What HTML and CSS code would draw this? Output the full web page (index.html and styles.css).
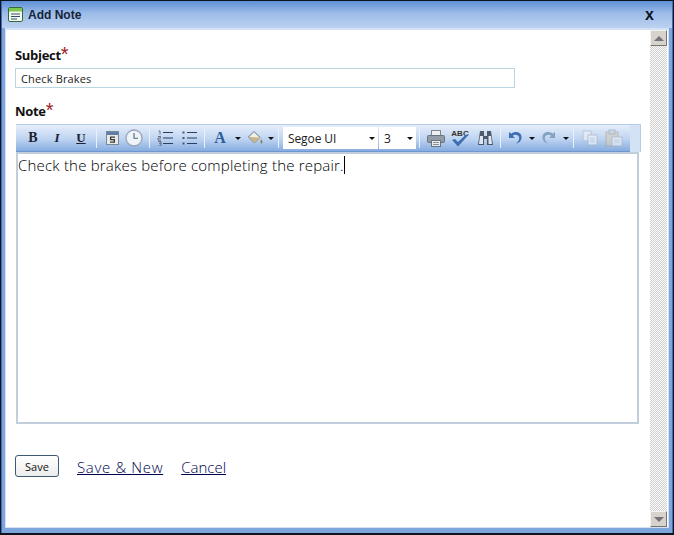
FILE: index.html
```html
<!DOCTYPE html>
<html lang="en">
<head>
<meta charset="utf-8">
<title>Add Note</title>
<link rel="stylesheet" href="styles.css">
</head>
<body>
<div class="window">
  <header class="titlebar">
    <svg class="title-icon" width="17" height="17" viewBox="0 0 17 17"><rect x="1.500" y="1.500" width="14" height="14" rx="1.500" fill="#f4f8ee" stroke="#2f6b3a"/><rect x="2" y="2" width="13" height="3.500" fill="#7ec850"/><path d="M4 8h9M4 10.500h9M4 13h6" stroke="#35506a"/></svg>
    <span class="title-text">Add Note</span>
    <span class="close">x</span>
  </header>
  <div class="client">
    <main class="content">
      <label class="field-label">Subject<span class="req">*</span></label>
      <input class="subject" type="text" value="Check Brakes">
      <label class="field-label note-label">Note<span class="req">*</span></label>
      <div class="editor">
        <div class="toolbar-wrap">
          <div class="toolbar">
            <span class="btn w24 fmt bold">B</span>
            <span class="btn w24 fmt italic">I</span>
            <span class="btn w24 fmt under">U</span>
            <span class="sep s9"></span>
            <span class="btn w20"><svg width="13" height="14" viewBox="0 0 13 14"><rect x=".5" y=".5" width="12" height="13" fill="#e8e8e4" stroke="#7b8896"/><rect x="1" y="1" width="11" height="3" fill="#5d7fa6"/><path d="M4 5.500h5v1.200H5.300v1.400H9v3.700H4v-1.200h3.700V9.300H4z" fill="#3a3a3a"/></svg></span>
            <span class="btn w24"><svg width="18" height="18" viewBox="0 0 18 18"><circle cx="9" cy="9" r="8" fill="#eef3f9" stroke="#98a4b4" stroke-width="1.300"/><path d="M9 4v5.300h4" fill="none" stroke="#5a6573" stroke-width="1.100"/></svg></span>
            <span class="sep s7"></span>
            <span class="btn w24"><svg width="16" height="16" viewBox="0 0 16 16"><path d="M6 2.500h10M6 8h10M6 13.500h10" stroke="#2a4060" stroke-width="1.100"/><path d="M1.500 1h1.500v3.500M1 6.500h2.500v1.500H1v2h3M1 11.500h3v1.800H2M4 13.300V16H1" fill="none" stroke="#556" stroke-width=".8"/></svg></span>
            <span class="btn w24"><svg width="16" height="16" viewBox="0 0 16 16"><path d="M6 2.500h10M6 8h10M6 13.500h10" stroke="#2a4060" stroke-width="1.100"/><path d="M1.500 1.500h2v2h-2zM1.500 7h2v2h-2zM1.500 12.500h2v2h-2z" fill="#4a5a70"/></svg></span>
            <span class="sep s8"></span>
            <span class="btn w22 font-a">A</span>
            <span class="arrow w13"></span>
            <span class="btn w22"><svg width="17" height="16" viewBox="0 0 17 16"><path d="M7 1.500l6 6-5.500 5.500-6-6z" fill="#f0f0ea" stroke="#6c7480"/><path d="M2 7l6 6 5-5.500z" fill="#c9b58a"/><path d="M14 9c1.500 2 2 3 1 4s-2 0-1.500-1z" fill="#8c7d5a"/></svg></span>
            <span class="arrow w9"></span>
            <span class="sep s8"></span>
            <span class="select w95">Segoe UI<i></i></span>
            <span class="select w37">3<i></i></span>
            <span class="sep s8"></span>
            <span class="btn w24 soft"><svg width="18" height="17" viewBox="0 0 18 17"><rect x="4.500" y=".5" width="9" height="6" fill="#f4f4f4" stroke="#777"/><rect x=".5" y="5.500" width="17" height="7" rx="1" fill="#8b929a" stroke="#5b626a"/><rect x="4.500" y="10.500" width="9" height="6" fill="#f4f4f4" stroke="#666"/><path d="M6 12.500h6M6 14.500h6" stroke="#888"/></svg></span>
            <span class="btn w24 abc"><b>ABC</b><svg width="18" height="13" viewBox="0 0 18 13"><path d="M1 6l3-1 3 3 8-7.500 2 1L7 12.500z" fill="#3d6fb0"/></svg></span>
            <span class="btn w24 gapl soft"><svg width="17" height="16" viewBox="0 0 17 16"><path d="M3 1h4v5h3V1h4l2 14h-6V9H7v6H1z" fill="#3c4450"/><path d="M3 6h3v8H2zM11.500 6H14l1 8h-3.500z" fill="#e6ecf2"/></svg></span>
            <span class="sep s6"></span>
            <span class="btn w24"><svg width="16" height="16" viewBox="0 0 16 16"><path d="M2 2v6h6L5.700 5.700C8 4 11 4.500 12 7c.7 2-.3 4.500-3 6.500 3.500-.5 6-3.500 5.500-7C14 2.500 9 .5 4.300 3.700z" fill="#3f70b4"/></svg></span>
            <span class="arrow w10"></span>
            <span class="btn w24"><svg width="16" height="16" viewBox="0 0 16 16"><path d="M14 2v6H8l2.300-2.300C8 4 5 4.500 4 7c-.7 2 .3 4.500 3 6.500-3.500-.5-6-3.500-5.500-7C2 2.500 7 .5 11.700 3.700z" fill="#83a2bf"/></svg></span>
            <span class="arrow w9"></span>
            <span class="sep s8"></span>
            <span class="btn w24 dim"><svg width="16" height="16" viewBox="0 0 16 16"><rect x="1" y="1" width="8" height="10" fill="#f0f4f8" stroke="#a5b3c3"/><rect x="6" y="5" width="9" height="10" fill="#fafcfe" stroke="#a5b3c3"/><path d="M8 8h5M8 10h5M8 12h5" stroke="#b9c5d3"/></svg></span>
            <span class="btn w24 dim"><svg width="18" height="18" viewBox="0 0 18 18"><rect x="1" y="3" width="12" height="14" fill="#d5cdb8" stroke="#a5a596"/><rect x="4" y="1" width="6" height="4" fill="#c7ccd3" stroke="#9aa3ad"/><rect x="7" y="8" width="10" height="9" fill="#f4f6f8" stroke="#a5b3c3"/><path d="M9 11h6M9 13h6" stroke="#b9c5d3"/></svg></span>
          </div>
        </div>
        <div class="edit-area">Check the brakes before completing the repair.<span class="caret"></span></div>
      </div>
      <div class="actions">
        <button class="save" type="button">Save</button>
        <a class="link save-new" href="#">Save &amp; New</a>
        <a class="link" href="#">Cancel</a>
      </div>
    </main>
    <div class="scrollbar">
      <span class="sb-btn"><i class="up"></i></span>
      <span class="sb-track"></span>
      <span class="sb-btn"><i class="down"></i></span>
    </div>
  </div>
</div>
</body>
</html>
```
FILE: styles.css
```css
* { box-sizing: border-box; }
html, body { margin: 0; padding: 0; background: #fff; }
body { font-family: "Open Sans", "Noto Sans", sans-serif; }
.window {
  width: 674px; height: 535px; display: flex; flex-direction: column;
  border: 1px solid #0d1420; border-width: 1px 1px 2px 1px;
  background: #7fa6dc; padding: 0 4px 5px 4px;
  box-shadow: inset 1px 0 0 #3d6cb8, inset -1px 0 0 #3d6cb8;
}
.titlebar {
  margin: 0 -3px; height: 27px; flex: none; display: flex; align-items: center; padding: 0 18px 0 5px;
  background: linear-gradient(#5e8fd6 0, #9cbce8 45%, #bcd2f0 100%);
}
.title-icon { flex: none; }
.title-text { margin-left: 4px; font: bold 12px "Liberation Sans", sans-serif; color: #16233a; }
.close { margin-left: auto; font: bold 16px/16px "Liberation Sans", sans-serif; color: #0c1524; }
.client {
  flex: 1; display: flex; min-height: 0; background: #fff;
  border: 1px solid #d3e1f4; border-width: 2px 1px 1px 1px;
}
.content { flex: 1; padding: 14px 0 0 9px; min-width: 0; display: flex; flex-direction: column; }
.field-label { font: bold 13px/20px "Open Sans", sans-serif; color: #111; height: 20px; letter-spacing: -.3px; display: block; }
.req { color: #a01d22; font: 20px/20px "Liberation Sans", sans-serif; vertical-align: -1px; }
.subject {
  display: block; width: 500px; height: 20px; margin-top: 4px; padding: 0 5px;
  border: 1px solid #b9d5e2; background: #fff; font: 11px "Open Sans", sans-serif; letter-spacing: .15px; color: #222; outline: 0;
}
.note-label { margin-top: 12px; }
.editor { width: 625px; margin-top: 4px; margin-left: 1px; }
.toolbar-wrap { background: #d3e2f5; border-top: 1px solid #b7cce6; height: 28px; border-right: 1px solid #b7cce6; }
.toolbar {
  width: 614px; height: 27px; display: flex; align-items: center; padding-left: 5px;
  background: linear-gradient(#e6eefb 0, #bdd3f1 55%, #86ace0 100%);
  border-bottom: 1px solid #6f97cf;
}
.btn { flex: none; height: 22px; display: flex; align-items: center; justify-content: center; position: relative; }
.w20 { width: 20px; } .w22 { width: 22px; } .w24 { width: 24px; }
.w9 { width: 9px; } .w10 { width: 10px; } .w13 { width: 13px; }
.w95 { width: 95px; } .w37 { width: 37px; margin-left: 1px; }
.gapl { margin-left: 1px; }
.fmt { font: bold 13px "Liberation Serif", serif; color: #1c2230; }
.bold { font-size: 14px; }
.italic { font-style: italic; }
.under { text-decoration: underline; }
.font-a { font: bold 16px "Liberation Serif", serif; color: #2f5d9c; }
.abc { flex-direction: column; }
.abc b { font: bold 8px/7px "Liberation Sans", sans-serif; color: #333; margin-bottom: -3px; }
.dim { opacity: .6; }
.soft { opacity: .85; }
.sep { flex: none; height: 19px; position: relative; }
.sep::after { content: ""; position: absolute; top: 0; bottom: 0; left: 3px; width: 1px; background: #e9f1fb; }
.s6 { width: 6px; } .s7 { width: 7px; } .s8 { width: 8px; } .s9 { width: 9px; }
.arrow { flex: none; height: 22px; display: flex; align-items: center; justify-content: center; }
.arrow::after { content: ""; border: 3px solid transparent; border-top: 3px solid #111; border-bottom: 0; }
.select {
  flex: none; height: 22px; background: #fff; display: flex; align-items: center; padding-left: 5px;
  font: 12px "Open Sans", sans-serif; letter-spacing: -.1px; color: #222; position: relative;
}
.select i { position: absolute; right: 3px; top: 10px; border: 3px solid transparent; border-top: 3px solid #111; border-bottom: 0; }
.edit-area {
  height: 272px; margin-top: 0; width: 623px; padding: 0;
  border: 2px solid #c1cede; background: #fff;
  font: 300 15px/22px "Open Sans", sans-serif; letter-spacing: .2px; color: #000; white-space: nowrap;
}
.caret { display: inline-block; width: 1px; height: 18px; background: #000; vertical-align: -3px; }
.actions { display: flex; align-items: center; margin-top: 31px; }
.save {
  width: 44px; height: 22px; padding: 0; border: 1px solid #3e5a72; border-radius: 3px;
  background: linear-gradient(#fff, #ececec); font: 11px "Open Sans", sans-serif; color: #111;
}
.link { margin-left: 18px; padding-top: 2px; font: 300 15px/20px "Open Sans", sans-serif; color: #000050; text-decoration: underline; }
.save-new { letter-spacing: .65px; }
.scrollbar { flex: none; width: 17px; display: flex; flex-direction: column; margin-right: 1px; }
.sb-btn {
  flex: none; height: 16px; display: flex; align-items: center; justify-content: center;
  background: #d6d3cc; border: 1px solid; border-color: #f4f3f0 #77756f #77756f #f4f3f0;
}
.sb-track { flex: 1; background: repeating-conic-gradient(#cfcfcf 0 25%, #fbfbfb 0 50%) 0 0 / 2px 2px; }
.up { border: 5px solid transparent; border-bottom: 5px solid #77717a; border-top: 0; }
.down { border: 5px solid transparent; border-top: 5px solid #77717a; border-bottom: 0; }
```
